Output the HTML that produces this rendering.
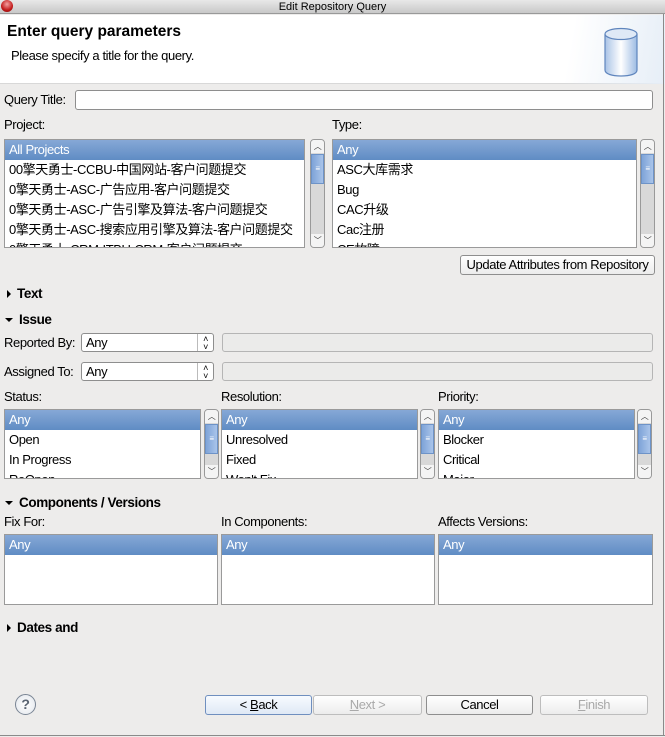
<!DOCTYPE html>
<html><head><meta charset="utf-8"><style>
*{box-sizing:border-box;margin:0;padding:0}
body{width:665px;height:737px;background:#edeceb;font-family:"Liberation Sans","Noto Sans CJK SC",sans-serif;font-size:13px;color:#000;position:relative;overflow:hidden;letter-spacing:-0.4px}
.a{position:absolute;white-space:nowrap}
.title{left:0;top:0;width:665px;height:14px;background:linear-gradient(#e8e8e8,#c8c8c8);border-bottom:1px solid #999;text-align:center;font-size:11px;line-height:14px;letter-spacing:0}
.hdr{left:0;top:15px;width:665px;height:69px;background:#fff;border-bottom:1px solid #d8d8d8}
.list{position:absolute;background:#fff;border:1px solid #9a9a9a;overflow:hidden}
.list div{height:20px;line-height:20px;padding-left:4px}
.list .sel{background:linear-gradient(#86a8d6,#5f8cc4);color:#fff}
.sb{position:absolute;width:15px;border:1px solid #999;border-radius:4px;background:#d8d8d8;overflow:hidden}
.sb .up,.sb .dn{position:absolute;left:0;width:13px;height:13px;background:#f4f4f4;font-size:8px;text-align:center;line-height:13px;color:#333}
.sb .up{top:0}.sb .dn{bottom:0}
.sb .th{position:absolute;left:0;top:14px;width:13px;height:30px;background:linear-gradient(90deg,#7fa4d8,#a9c4ea);border:1px solid #6d93c8;font-size:8px;color:#fff;text-align:center;line-height:28px}
.btn{position:absolute;height:20px;border:1px solid #8e8e8e;border-radius:3px;background:linear-gradient(#fff,#ececec);text-align:center;line-height:18px}
.dis{color:#a9a9a9;border-color:#bdbdbd}
.combo{position:absolute;height:19px;border:1px solid #8e8e8e;border-radius:3px;background:#fff;line-height:17px;padding-left:4px}
.combo span{position:absolute;right:0;top:0;width:16px;height:17px;border-left:1px solid #bbb;font-size:9px;text-align:center;line-height:8px;padding-top:1px}
.field{position:absolute;height:19px;border:1px solid #b5b5b5;border-radius:3px;background:#ebebea}
.sec{font-weight:bold;font-size:13.5px}
.tri{display:inline-block;width:0;height:0;margin-right:6px;vertical-align:middle}
.tr{border-top:4px solid transparent;border-bottom:4px solid transparent;border-left:4px solid #000}
.td{border-left:4px solid transparent;border-right:4px solid transparent;border-top:4px solid #000}
</style></head><body>
<div class="a title">Edit Repository Query</div>
<div class="a" style="left:1px;top:0;width:12px;height:12px;border-radius:6px;background:radial-gradient(circle at 50% 35%,#f3a0a0,#c21b1b 60%,#7a0c0c)"></div>
<div class="a hdr"></div>
<div class="a" style="left:0;top:15px;width:665px;height:69px;background:linear-gradient(100deg,transparent 85%,#e6eef7)"></div>
<div class="a" style="left:7px;top:23px;font-size:15.5px;font-weight:bold;letter-spacing:0">Enter query parameters</div>
<div class="a" style="left:11px;top:48px">Please specify a title for the query.</div>
<svg class="a" style="left:602px;top:26px" width="38" height="52" viewBox="0 0 38 52"><defs><linearGradient id="g" x1="0" x2="1"><stop offset="0" stop-color="#a9c3e6"/><stop offset=".5" stop-color="#fff"/><stop offset="1" stop-color="#9dbbe3"/></linearGradient></defs><path d="M3 8v36c0 4 7 6 16 6s16-2 16-6V8" fill="url(#g)" stroke="#5f85bd" stroke-width="1.2"/><ellipse cx="19" cy="8" rx="16" ry="5.5" fill="#dfe9f6" stroke="#5f85bd" stroke-width="1.2"/></svg>

<div class="a" style="left:4px;top:92px">Query Title:</div>
<div class="a" style="left:75px;top:90px;width:578px;height:20px;background:#fff;border:1px solid #8e8e8e;border-radius:3px"></div>

<div class="a" style="left:4px;top:117px">Project:</div>
<div class="a" style="left:332px;top:117px">Type:</div>
<div class="list" style="left:4px;top:139px;width:301px;height:109px">
<div class="sel">All Projects</div><div>00擎天勇士-CCBU-中国网站-客户问题提交</div><div>0擎天勇士-ASC-广告应用-客户问题提交</div><div>0擎天勇士-ASC-广告引擎及算法-客户问题提交</div><div>0擎天勇士-ASC-搜索应用引擎及算法-客户问题提交</div><div>0擎天勇士-CRM-ITBU-CRM-客户问题提交</div></div>
<div class="sb" style="left:310px;top:139px;height:109px"><div class="up">︿</div><div class="th">≡</div><div class="dn">﹀</div></div>
<div class="list" style="left:332px;top:139px;width:305px;height:109px">
<div class="sel">Any</div><div>ASC大库需求</div><div>Bug</div><div>CAC升级</div><div>Cac注册</div><div>CE故障</div></div>
<div class="sb" style="left:640px;top:139px;height:109px"><div class="up">︿</div><div class="th">≡</div><div class="dn">﹀</div></div>
<div class="btn" style="left:460px;top:255px;width:195px;font-size:13px">Update Attributes from Repository</div>

<div class="a sec" style="left:7px;top:286px"><span class="tri tr"></span>Text</div>
<div class="a sec" style="left:5px;top:312px"><span class="tri td"></span>Issue</div>

<div class="a" style="left:4px;top:335px">Reported By:</div>
<div class="combo" style="left:81px;top:333px;width:133px">Any<span>˄<br>˅</span></div>
<div class="field" style="left:222px;top:333px;width:431px"></div>
<div class="a" style="left:4px;top:364px">Assigned To:</div>
<div class="combo" style="left:81px;top:362px;width:133px">Any<span>˄<br>˅</span></div>
<div class="field" style="left:222px;top:362px;width:431px"></div>

<div class="a" style="left:4px;top:389px">Status:</div>
<div class="a" style="left:221px;top:389px">Resolution:</div>
<div class="a" style="left:438px;top:389px">Priority:</div>
<div class="list" style="left:4px;top:409px;width:197px;height:70px"><div class="sel">Any</div><div>Open</div><div>In Progress</div><div>ReOpen</div></div>
<div class="sb" style="left:204px;top:409px;height:70px"><div class="up">︿</div><div class="th">≡</div><div class="dn">﹀</div></div>
<div class="list" style="left:221px;top:409px;width:197px;height:70px"><div class="sel">Any</div><div>Unresolved</div><div>Fixed</div><div>Won't Fix</div></div>
<div class="sb" style="left:420px;top:409px;height:70px"><div class="up">︿</div><div class="th">≡</div><div class="dn">﹀</div></div>
<div class="list" style="left:438px;top:409px;width:197px;height:70px"><div class="sel">Any</div><div>Blocker</div><div>Critical</div><div>Major</div></div>
<div class="sb" style="left:637px;top:409px;height:70px"><div class="up">︿</div><div class="th">≡</div><div class="dn">﹀</div></div>

<div class="a sec" style="left:5px;top:495px"><span class="tri td"></span>Components / Versions</div>
<div class="a" style="left:4px;top:514px">Fix For:</div>
<div class="a" style="left:221px;top:514px">In Components:</div>
<div class="a" style="left:438px;top:514px">Affects Versions:</div>
<div class="list" style="left:4px;top:534px;width:214px;height:71px"><div class="sel">Any</div></div>
<div class="list" style="left:221px;top:534px;width:214px;height:71px"><div class="sel">Any</div></div>
<div class="list" style="left:438px;top:534px;width:215px;height:71px"><div class="sel">Any</div></div>

<div class="a sec" style="left:7px;top:620px"><span class="tri tr"></span>Dates and</div>

<div class="a" style="left:15px;top:694px;width:21px;height:21px;border:1.5px solid #7a8594;border-radius:50%;background:radial-gradient(#fff,#e2e6ec);text-align:center;line-height:18px;font-weight:bold;font-size:14px;color:#5a6472">?</div>
<div class="btn" style="left:205px;top:695px;width:107px;border-color:#6f8fbf;background:linear-gradient(#f7fbff,#dfe9f5)">&lt; <u>B</u>ack</div>
<div class="btn dis" style="left:313px;top:695px;width:109px"><u>N</u>ext &gt;</div>
<div class="btn" style="left:426px;top:695px;width:107px">Cancel</div>
<div class="btn dis" style="left:540px;top:695px;width:108px"><u>F</u>inish</div>
<div class="a" style="left:0;top:735px;width:665px;height:1px;background:#8a8a8a"></div>
<div class="a" style="left:663px;top:14px;width:1px;height:722px;background:#8a8a8a"></div>
</body></html>
